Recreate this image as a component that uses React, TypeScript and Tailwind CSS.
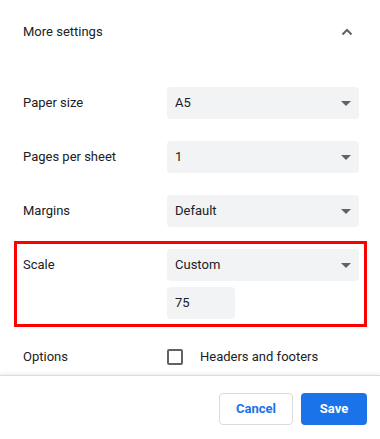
const font = { fontFamily: 'Roboto, "Liberation Sans", sans-serif' };

const Caret = () => (
  <svg width="10" height="5" viewBox="0 0 10 5" className="shrink-0">
    <path d="M0 0h10L5 5z" fill="#5f6368" />
  </svg>
);

const Select = ({ value }: { value: string }) => (
  <div className="flex h-8 w-[192px] items-center justify-between rounded bg-[#f1f3f4] pl-2 pr-2 text-[13px] text-[#202124]">
    <span>{value}</span>
    <Caret />
  </div>
);

const Row = ({ label, children }: { label: string; children: React.ReactNode }) => (
  <div className="flex items-center">
    <div className="w-[144px] text-[13px] text-[#202124]">{label}</div>
    {children}
  </div>
);

export default function App() {
  return (
    <div className="flex h-[439px] w-[380px] flex-col bg-white" style={font}>
      <div className="flex-1 pl-[23px] pr-[21px]">
        <div className="flex h-16 items-center justify-between">
          <span className="text-[13px] text-[#202124]">More settings</span>
          <svg width="20" height="20" viewBox="0 0 20 20" className="mr-[2px]">
            <path d="M5.5 12.5l4.5-4.5 4.5 4.5" fill="none" stroke="#5f6368" strokeWidth="2" />
          </svg>
        </div>

        <div className="mt-[23px] flex flex-col gap-[22px]">
          <Row label="Paper size">
            <Select value="A5" />
          </Row>
          <Row label="Pages per sheet">
            <Select value="1" />
          </Row>
          <Row label="Margins">
            <Select value="Default" />
          </Row>

          <div className="relative flex flex-col gap-[6px]">
            <div className="pointer-events-none absolute -left-[9px] -right-[8px] -top-[8px] -bottom-[8px] border-[3px] border-[#ff0000]" />
            <Row label="Scale">
              <Select value="Custom" />
            </Row>
            <div className="flex">
              <div className="w-[144px]" />
              <div className="flex h-8 w-[68px] items-center rounded bg-[#f1f3f4] px-2 text-[13px] text-[#202124]">
                75
              </div>
            </div>
          </div>
        </div>

        <div className="mt-[30px] flex h-4 items-center">
          <div className="w-[144px] text-[13px] text-[#202124]">Options</div>
          <div className="h-4 w-4 rounded-[2px] border-2 border-[#5f6368]" />
          <span className="ml-[17px] text-[13px] text-[#202124]">Headers and footers</span>
        </div>
      </div>

      <div className="flex h-16 justify-end gap-2 border-t border-[#dadce0] pr-[13px] pt-[17px] shadow-[0_-2px_3px_rgba(0,0,0,0.06)]">
        <button className="h-8 w-[74px] rounded border border-[#dadce0] bg-white text-[13px] font-bold text-[#1a73e8]">
          Cancel
        </button>
        <button className="h-8 w-[66px] rounded bg-[#1a73e8] text-[13px] font-bold text-white">
          Save
        </button>
      </div>
    </div>
  );
}
